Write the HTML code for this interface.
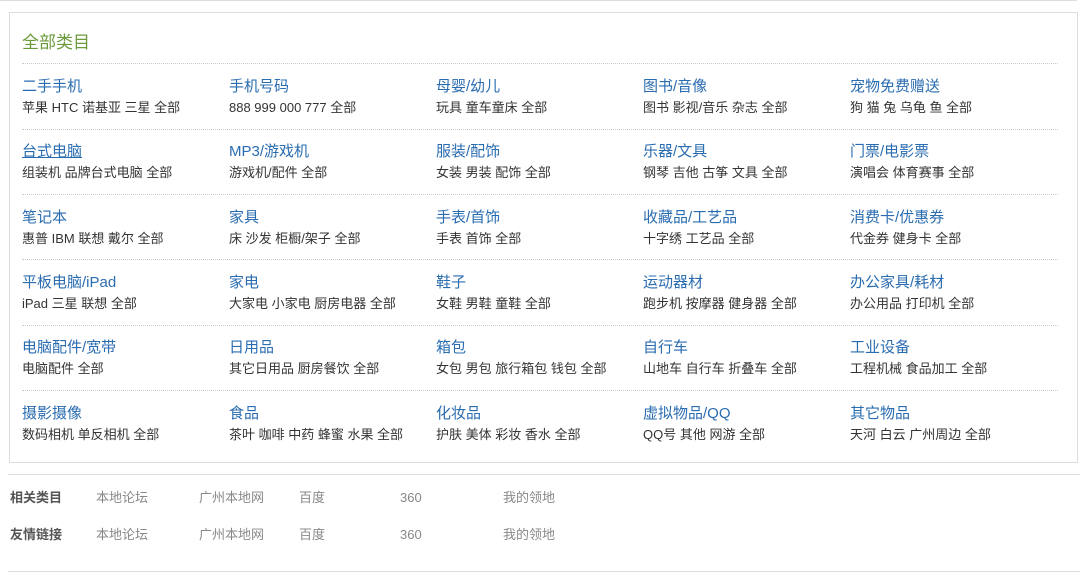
<!DOCTYPE html>
<html><head><meta charset="utf-8"><style>
*{margin:0;padding:0;box-sizing:border-box}
body{width:1080px;height:582px;background:#fff;font-family:"Liberation Sans","Noto Sans CJK SC",sans-serif;position:relative;overflow:hidden}
.top{position:absolute;left:0;top:0;width:1077px;height:1px;background:#ddd}
.box{position:absolute;left:9px;top:12px;width:1069px;height:451px;border:1px solid #ddd}
.title{position:absolute;left:12px;top:15px;font-size:17px;color:#6a9a3a}
.dot{position:absolute;left:12px;width:1036px;border-top:1px dotted #ccc}
.c{position:absolute;white-space:nowrap}
.c a{display:block;font-size:15px;color:#2a6cb0;text-decoration:none;line-height:17px}
.c span{display:block;font-size:13px;color:#333;line-height:15px;margin-top:5px}
.hl{position:absolute;left:8px;width:1072px;height:1px;background:#ddd}
.r{position:absolute;font-size:13px;color:#888;line-height:15px}
.lb{position:absolute;left:10px;font-size:13px;font-weight:bold;color:#555;line-height:15px}
</style></head><body>
<div class="top"></div>
<div class="box">
<div class="title">全部类目</div>
<div class="dot" style="top:50px"></div>
<div class="dot" style="top:116px"></div>
<div class="dot" style="top:181px"></div>
<div class="dot" style="top:246px"></div>
<div class="dot" style="top:312px"></div>
<div class="dot" style="top:377px"></div>
</div>
<div id="g"></div>
<div class="hl" style="top:474px"></div>
<div class="hl" style="top:571px"></div>
<div class="lb" style="top:490px">相关类目</div>
<div class="lb" style="top:527px">友情链接</div>
<div class="r" style="left:96px;top:490px">本地论坛</div><div class="r" style="left:199px;top:490px">广州本地网</div><div class="r" style="left:299px;top:490px">百度</div><div class="r" style="left:400px;top:490px">360</div><div class="r" style="left:503px;top:490px">我的领地</div>
<div class="r" style="left:96px;top:527px">本地论坛</div><div class="r" style="left:199px;top:527px">广州本地网</div><div class="r" style="left:299px;top:527px">百度</div><div class="r" style="left:400px;top:527px">360</div><div class="r" style="left:503px;top:527px">我的领地</div>
<script>
var d=[
[["二手手机","苹果 HTC 诺基亚 三星 全部"],["手机号码","888 999 000 777 全部"],["母婴/幼儿","玩具 童车童床 全部"],["图书/音像","图书 影视/音乐 杂志 全部"],["宠物免费赠送","狗 猫 兔 乌龟 鱼 全部"]],
[["台式电脑","组装机 品牌台式电脑 全部"],["MP3/游戏机","游戏机/配件 全部"],["服装/配饰","女装 男装 配饰 全部"],["乐器/文具","钢琴 吉他 古筝 文具 全部"],["门票/电影票","演唱会 体育赛事 全部"]],
[["笔记本","惠普 IBM 联想 戴尔 全部"],["家具","床 沙发 柜橱/架子 全部"],["手表/首饰","手表 首饰 全部"],["收藏品/工艺品","十字绣 工艺品 全部"],["消费卡/优惠券","代金券 健身卡 全部"]],
[["平板电脑/iPad","iPad 三星 联想 全部"],["家电","大家电 小家电 厨房电器 全部"],["鞋子","女鞋 男鞋 童鞋 全部"],["运动器材","跑步机 按摩器 健身器 全部"],["办公家具/耗材","办公用品 打印机 全部"]],
[["电脑配件/宽带","电脑配件 全部"],["日用品","其它日用品 厨房餐饮 全部"],["箱包","女包 男包 旅行箱包 钱包 全部"],["自行车","山地车 自行车 折叠车 全部"],["工业设备","工程机械 食品加工 全部"]],
[["摄影摄像","数码相机 单反相机 全部"],["食品","茶叶 咖啡 中药 蜂蜜 水果 全部"],["化妆品","护肤 美体 彩妆 香水 全部"],["虚拟物品/QQ","QQ号 其他 网游 全部"],["其它物品","天河 白云 广州周边 全部"]]];
var h="";
d.forEach(function(r,i){r.forEach(function(c,j){
h+='<div class="c" style="left:'+(22+207*j)+'px;top:'+(78+65.3*i)+'px"><a'+(i==1&&j==0?' style="text-decoration:underline"':'')+'>'+c[0]+'</a><span>'+c[1]+'</span></div>';});});
document.getElementById("g").innerHTML=h;
</script>
</body></html>
